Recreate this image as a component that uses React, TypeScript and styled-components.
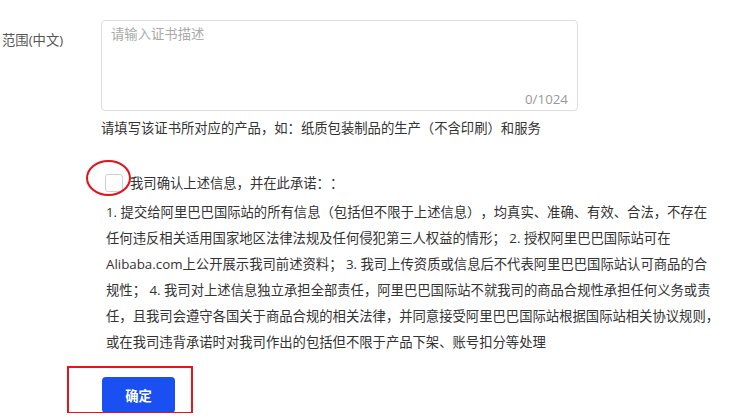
import styled, { createGlobalStyle } from 'styled-components';

const GlobalStyle = createGlobalStyle`
	html, body {
		margin: 0;
		background: #fff;
	}

	body {
		font-family: 'Open Sans', 'Noto Sans CJK SC', sans-serif;
		font-size: 13.33px;
		color: #333;
		text-spacing-trim: space-all;
	}
`;

const Page = styled.div`
	display: flex;
	flex-direction: column;
	padding: 20px 0 0 2px;
`;

const FormRow = styled.div`
	display: flex;
	align-items: flex-start;
`;

const Label = styled.div`
	width: 99px;
	padding-top: 10px;
	line-height: 20px;
	color: #555;
`;

const Field = styled.div`
	display: flex;
	flex-direction: column;
	width: 477px;
`;

const TextAreaBox = styled.div`
	position: relative;
	box-sizing: border-box;
	height: 91px;
	border: 1px solid #dedede;
	border-radius: 4px;
`;

const TextArea = styled.textarea`
	box-sizing: border-box;
	width: 100%;
	height: 100%;
	padding: 3px 9px;
	border: none;
	outline: none;
	resize: none;
	background: transparent;
	font: inherit;
	line-height: 20px;
	color: #333;

	&::placeholder {
		color: #aaa;
	}
`;

const Counter = styled.span`
	position: absolute;
	right: 9px;
	bottom: 1px;
	line-height: 20px;
	color: #999;
`;

const Hint = styled.div`
	margin-top: 7px;
	height: 20px;
	line-height: 20px;
	color: #333;
`;

const Agreement = styled.div`
	margin: 36px 0 0 103px;
`;

const CheckRow = styled.label`
	display: flex;
	align-items: center;
	gap: 7px;
	height: 18px;
	line-height: 20px;
`;

const Marked = styled.span`
	position: relative;
	display: inline-flex;
`;

const Checkbox = styled.span`
	box-sizing: border-box;
	width: 18px;
	height: 18px;
	border: 1px solid #d0d0d0;
	border-radius: 3px;
	background: #fff;
`;

const Ellipse = styled.span`
	position: absolute;
	left: -19px;
	top: -14px;
	width: 45px;
	height: 36px;
	box-sizing: border-box;
	border: 2px solid #e3121b;
	border-radius: 50%;
`;

const Terms = styled.p`
	margin: 7px 0 0 1px;
	width: 614px;
	height: 156px;
	line-height: 26px;
	color: #333;
`;

const Actions = styled.div`
	display: flex;
	margin: 22px 0 0 100px;
`;

const Framed = styled.div`
	position: relative;
`;

const Frame = styled.span`
	position: absolute;
	left: -35px;
	top: -11px;
	right: -18px;
	bottom: -1px;
	border: 2px solid #e8141c;
	pointer-events: none;
`;

const Button = styled.button`
	display: block;
	width: 73px;
	height: 36px;
	padding: 0;
	border: none;
	border-radius: 4px;
	background: #1a4ff2;
	color: #fff;
	font: inherit;
	font-weight: 700;
	cursor: pointer;
`;

const terms =
	'1. 提交给阿里巴巴国际站的所有信息（包括但不限于上述信息），均真实、准确、有效、合法，不存在任何违反相关适用国家地区法律法规及任何侵犯第三人权益的情形； 2. 授权阿里巴巴国际站可在Alibaba.com上公开展示我司前述资料； 3. 我司上传资质或信息后不代表阿里巴巴国际站认可商品的合规性； 4. 我司对上述信息独立承担全部责任，阿里巴巴国际站不就我司的商品合规性承担任何义务或责任，且我司会遵守各国关于商品合规的相关法律，并同意接受阿里巴巴国际站根据国际站相关协议规则，或在我司违背承诺时对我司作出的包括但不限于产品下架、账号扣分等处理';

export default function App() {
	return (
		<>
			<GlobalStyle />
			<Page>
				<FormRow>
					<Label>范围(中文)</Label>
					<Field>
						<TextAreaBox>
							<TextArea placeholder="请输入证书描述" maxLength={1024} />
							<Counter>0/1024</Counter>
						</TextAreaBox>
						<Hint>请填写该证书所对应的产品，如：纸质包装制品的生产（不含印刷）和服务</Hint>
					</Field>
				</FormRow>
				<Agreement>
					<CheckRow>
						<Marked>
							<Checkbox />
							<Ellipse />
						</Marked>
						我司确认上述信息，并在此承诺：：
					</CheckRow>
					<Terms>{terms}</Terms>
				</Agreement>
				<Actions>
					<Framed>
						<Button>确定</Button>
						<Frame />
					</Framed>
				</Actions>
			</Page>
		</>
	);
}
